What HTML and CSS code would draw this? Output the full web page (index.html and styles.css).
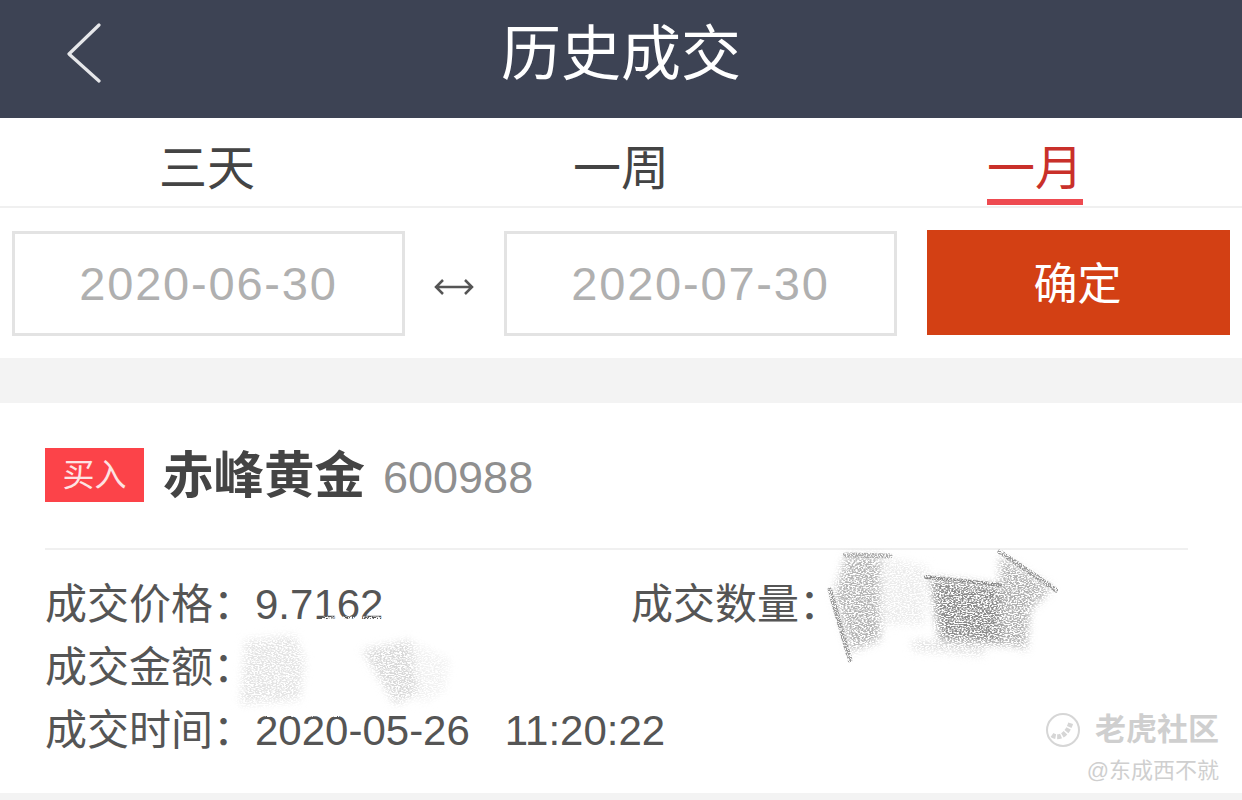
FILE: index.html
```html
<!DOCTYPE html>
<html>
<head lang="en">
    <meta charset="UTF-8">
    <title>历史成交</title>
    <link rel="stylesheet" href="styles.css">
</head>
<body>
<div class="header">
    <svg class="back" width="34" height="60" viewBox="0 0 34 60"><path d="M32 2 L2 31 L32 58" fill="none" stroke="#e6e7ea" stroke-width="3.2" stroke-linecap="round" stroke-linejoin="round"/></svg>
    <h1>历史成交</h1>
</div>
<ul class="tabs">
    <li>三天</li>
    <li>一周</li>
    <li class="promoted"><span>一月</span></li>
</ul>
<div class="dates">
    <div class="date">2020-06-30</div>
    <div class="arrow">
        <svg width="40" height="24" viewBox="0 0 40 24"><path d="M2 12 H38 M9 5 L2 12 L9 19 M31 5 L38 12 L31 19" fill="none" stroke="#555" stroke-width="2.5"/></svg>
    </div>
    <div class="date">2020-07-30</div>
    <div class="confirm">确定</div>
</div>
<div class="band"></div>
<div class="card">
    <div class="title">
        <span class="badge">买入</span>
        <span class="name">赤峰黄金</span>
        <span class="code">600988</span>
    </div>
    <div class="info">
        <div class="row">
            <div class="cell"><span class="label">成交价格：</span><span class="val">9.7162</span></div>
            <div class="cell"><span class="label">成交数量：</span></div>
        </div>
        <div class="row">
            <div class="cell"><span class="label">成交金额：</span></div>
        </div>
        <div class="row">
            <div class="cell"><span class="label">成交时间：</span><span class="val">2020-05-26</span><span class="val time">11:20:22</span></div>
        </div>
    </div>
</div>
<svg class="scribble" width="1242" height="800" viewBox="0 0 1242 800">
    <defs>
        <filter id="grain" x="-5%" y="-5%" width="110%" height="110%">
            <feGaussianBlur in="SourceGraphic" stdDeviation="4" result="soft"/>
            <feTurbulence type="fractalNoise" baseFrequency="0.5 0.9" numOctaves="3" seed="7" result="n"/>
            <feColorMatrix in="n" type="matrix" values="0 0 0 0 0  0 0 0 0 0  0 0 0 0 0  0 0 0 5 -1.9" result="speck"/>
            <feComposite in="soft" in2="speck" operator="in"/>
        </filter>
        <filter id="grain2" x="-5%" y="-5%" width="110%" height="110%">
            <feTurbulence type="fractalNoise" baseFrequency="0.8" numOctaves="2" seed="3" result="n"/>
            <feColorMatrix in="n" type="matrix" values="0 0 0 0 0  0 0 0 0 0  0 0 0 0 0  0 0 0 6 -2.4" result="speck"/>
            <feComposite in="SourceGraphic" in2="speck" operator="in"/>
        </filter>
    </defs>
    <g filter="url(#grain)">
        <path d="M846 556 L885 556 L880 640 L850 652 L834 595 Z" fill="#b4b4b4"/>
        <path d="M880 556 L928 566 L925 625 L880 625 Z" fill="#ececec"/>
        <path d="M930 578 L1000 586 L1012 645 L940 640 Z" fill="#8a8a8a"/>
        <path d="M1000 556 L1052 588 L1030 610 L1026 650 L1000 640 Z" fill="#b0b0b0"/>
        <path d="M912 640 L985 642 L985 656 L912 650 Z" fill="#e0e0e0"/>
        <path d="M245 640 L295 635 L305 660 L300 700 L240 705 Z" fill="#e4e4e4"/>
        <path d="M362 650 L410 640 L425 690 L395 705 Z" fill="#d8d8d8"/>
        <path d="M410 640 L450 660 L445 690 L420 705 Z" fill="#f2f2f2"/>
    </g>
    <g filter="url(#grain2)" fill="none" stroke-linecap="round">
        <path d="M830 590 L850 660" stroke="#999" stroke-width="5"/>
        <path d="M845 555 L890 556" stroke="#aaa" stroke-width="5"/>
        <path d="M1000 552 L1056 590" stroke="#999" stroke-width="5"/>
        <path d="M926 577 L1000 585" stroke="#888" stroke-width="4"/>
        <path d="M325 620 L385 620" stroke="#fff" stroke-width="7"/>
        <path d="M255 714 L345 714" stroke="#fff" stroke-width="6"/>
    </g>
</svg>
<div class="mark">
    <div class="mark-top">
        <svg width="36" height="36" viewBox="0 0 36 36"><circle cx="18" cy="18" r="16" fill="none" stroke="#d6d6d6" stroke-width="2"/><path d="M7 23 C14 28 23 22 26 10" fill="none" stroke="#d6d6d6" stroke-width="5" stroke-dasharray="4 1.5"/></svg>
        <span>老虎社区</span>
    </div>
    <div class="mark-sub">@东成西不就</div>
</div>
<div class="foot"></div>
</body>
</html>
```

FILE: styles.css
```css
*{
    margin: 0;
    padding: 0;
    box-sizing: border-box;
}
body{
    width: 1242px;
    height: 800px;
    overflow: hidden;
    position: relative;
    background-color: #fff;
    font-family: "Liberation Sans", "Noto Sans CJK SC", sans-serif;
}
.header{
    height: 118px;
    padding-bottom: 8px;
    background-color: #3d4354;
    display: flex;
    align-items: center;
    justify-content: center;
    position: relative;
}
.header h1{
    font-size: 60px;
    line-height: 80px;
    font-weight: normal;
    color: #fff;
}
.back{
    position: absolute;
    left: 67px;
    top: 23px;
}
.tabs{
    list-style: none;
    height: 90px;
    display: flex;
    border-bottom: 2px solid #f0f0f0;
}
.tabs li{
    flex: 1;
    display: flex;
    justify-content: center;
    font-size: 48px;
    line-height: 101px;
    color: #444;
    height: 88px;
    overflow: hidden;
}
.tabs li.promoted{
    color: #c9302a;
}
.tabs li span{
    display: block;
    height: 87px;
    border-bottom: 6px solid #ee4a50;
    line-height: 101px;
}
.dates{
    height: 150px;
    display: flex;
    align-items: flex-start;
    padding: 22px 12px 0;
}
.date{
    width: 393px;
    height: 105px;
    margin-top: 1px;
    border: 3px solid #e3e3e3;
    font-size: 47px;
    line-height: 99px;
    text-align: center;
    color: #b0b0b0;
    letter-spacing: 1.8px;
}
.arrow{
    width: 99px;
    height: 105px;
    padding-right: 2px;
    display: flex;
    align-items: center;
    justify-content: center;
    padding-top: 9px;
}
.confirm{
    width: 303px;
    height: 105px;
    margin-left: 30px;
    padding-right: 2px;
    background-color: #d34014;
    color: #fff;
    font-size: 44px;
    line-height: 110px;
    text-align: center;
}
.band{
    height: 45px;
    background-color: #f3f3f3;
}
.card{
    height: 390px;
    padding: 45px 54px 0 45px;
}
.title{
    height: 102px;
    display: flex;
    align-items: flex-start;
    border-bottom: 2px solid #f0f0f0;
}
.badge{
    width: 99px;
    height: 54px;
    line-height: 54px;
    text-align: center;
    background-color: #fc4349;
    color: #fde3e3;
    font-size: 32px;
}
.name{
    margin-left: 19px;
    font-size: 50.5px;
    font-weight: bold;
    line-height: 56px;
    color: #444;
}
.code{
    margin-left: 18px;
    font-size: 45px;
    line-height: 60px;
    color: #8f8f8f;
}
.info{
    padding-top: 23px;
}
.row{
    display: flex;
    height: 63px;
    font-size: 42px;
    line-height: 63px;
    color: #555;
    white-space: nowrap;
}
.cell{
    display: flex;
}
.cell:first-child{
    width: 586px;
}
.label{
    flex: none;
    width: 210px;
}
.val{
    flex: none;
}
.time{
    margin-left: 35px;
}
.scribble{
    position: absolute;
    left: 0;
    top: 0;
}
.mark{
    position: absolute;
    right: 23px;
    top: 708px;
    text-align: right;
    color: #cfcfcf;
}
.mark-top{
    display: flex;
    align-items: center;
    justify-content: flex-end;
    font-size: 31px;
    font-weight: bold;
    line-height: 44px;
}
.mark-top svg{
    margin-right: 14px;
}
.mark-sub{
    font-size: 22px;
    line-height: 38px;
}
.foot{
    position: absolute;
    left: 0;
    top: 793px;
    width: 1242px;
    height: 7px;
    background-color: #f3f3f3;
}
```
